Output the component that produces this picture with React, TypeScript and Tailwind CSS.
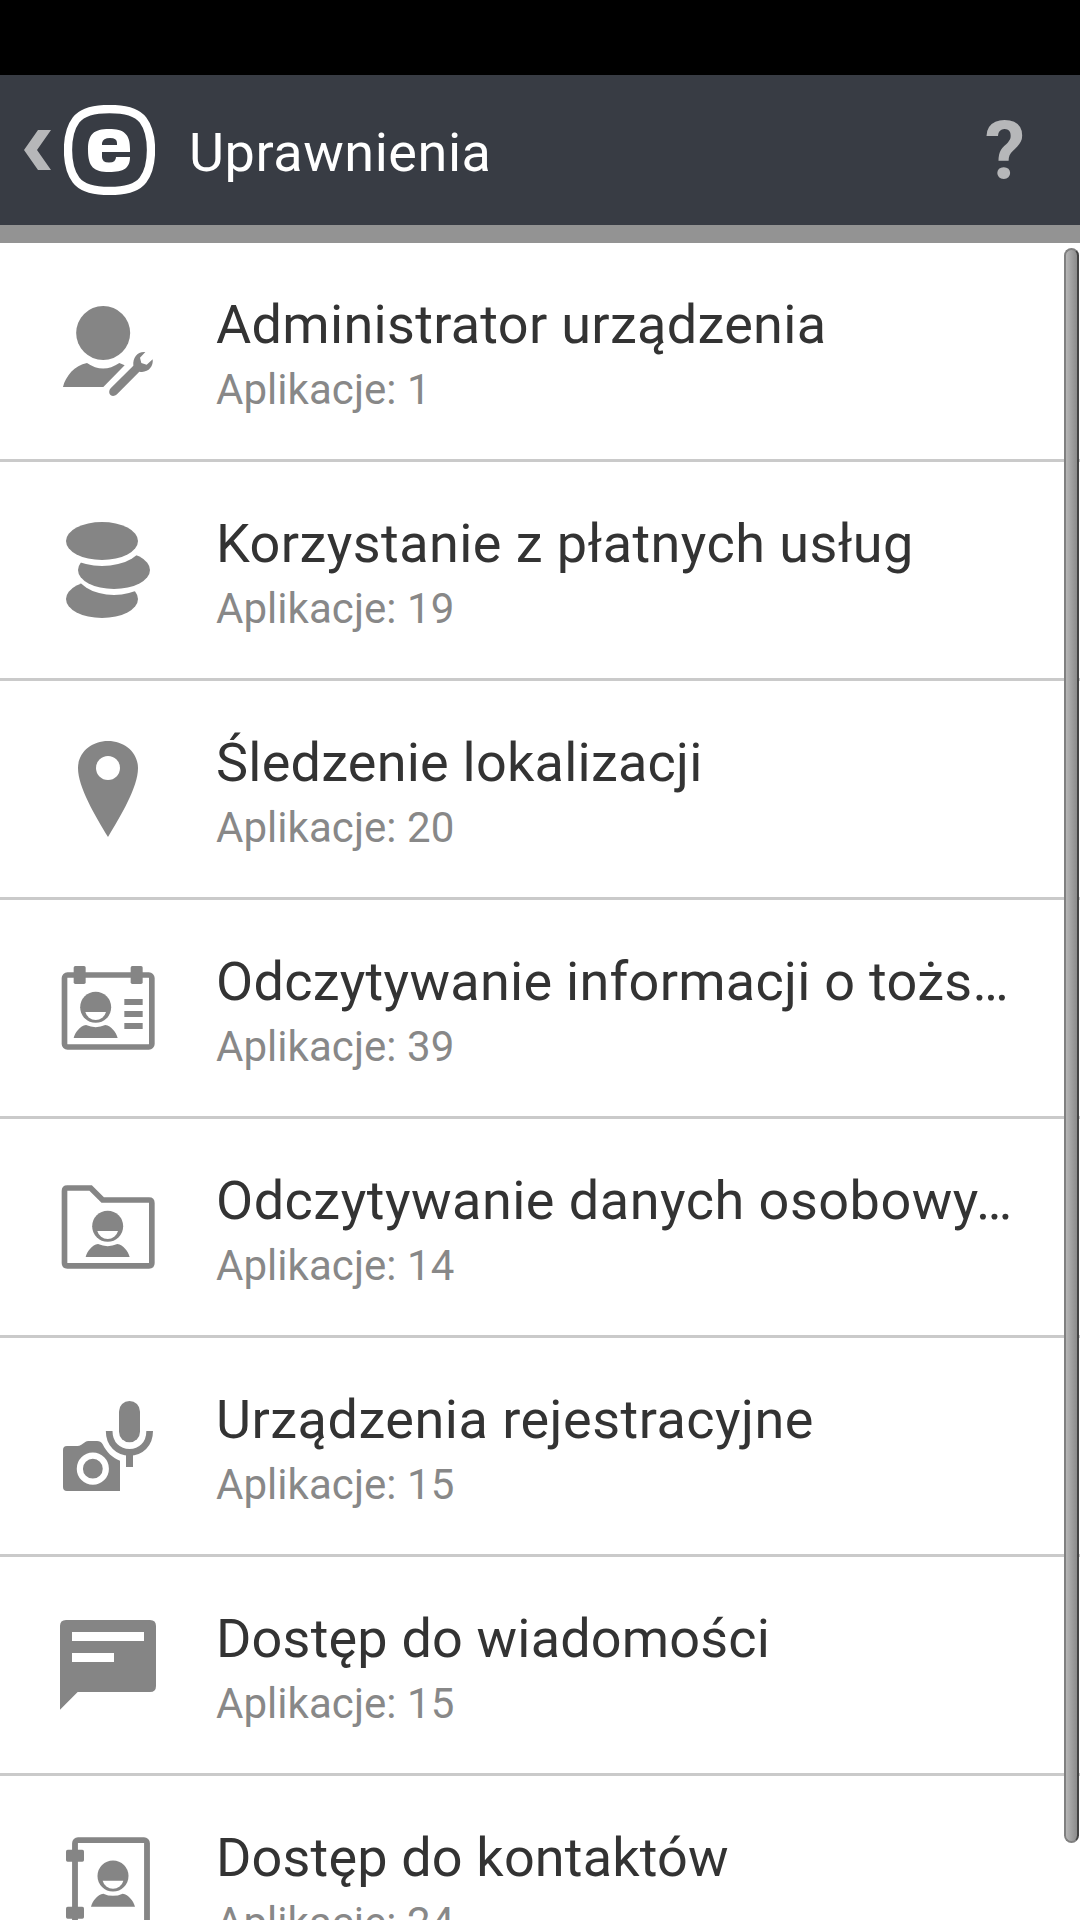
import type { ReactNode } from "react";

/* Icons are drawn on a 420 x 648 grid, three units per pixel, one grid per list row. */
function RowIcon({ children }: { children: ReactNode }) {
  return (
    <svg viewBox="0 0 420 648" className="h-[216px] w-[140px] shrink-0 fill-[#858585]">
      {children}
    </svg>
  );
}

function Person() {
  return (
    <>
      <circle cx="167" cy="202" r="46.500" />
      <path d="M136 216H198A32 32 0 0 1 136 216Z" fill="#fff" />
      <path d="M101 294C106 276 120 258 138 255Q167 268 196 255C214 258 228 276 233 294Z" />
    </>
  );
}

const AdminIcon = () => (
  <RowIcon>
    <g transform="translate(0 111)">
      <circle cx="189.500" cy="159" r="81" />
      <path d="M69 321C76 290 104 255 141 249Q189 282 238 249L254 256L190 321Z" />
      <path d="M212 325L280 257C278 232 292 214 316 216L300 233L304 249L320 254L338 238C341 261 323 280 298 275L231 343C215 357 200 339 212 325Z" />
    </g>
  </RowIcon>
);

const CoinsIcon = () => (
  <RowIcon>
    <g transform="translate(0 114)">
      <ellipse cx="186" cy="297" rx="108" ry="57" />
      <ellipse cx="222" cy="210" rx="117" ry="75" fill="#fff" />
      <ellipse cx="222" cy="210" rx="108" ry="57" />
      <ellipse cx="186" cy="123" rx="126" ry="75" fill="#fff" />
      <ellipse cx="186" cy="123" rx="108" ry="57" />
    </g>
  </RowIcon>
);

const PinIcon = () => (
  <RowIcon>
    <g transform="translate(0 117)">
      <path d="M204 63C254 63 294 98 294 144C294 202 242 288 204 351C166 288 114 202 114 144C114 98 154 63 204 63Z" />
      <circle cx="204" cy="144" r="36" fill="#fff" />
    </g>
  </RowIcon>
);

const IdentityIcon = () => (
  <RowIcon>
    <g transform="translate(0 120)">
      <rect x="73.500" y="105" width="262" height="216" rx="9" fill="none" stroke="#858585" strokeWidth="17" />
      <rect x="101" y="78" width="36" height="54" rx="5" />
      <rect x="272" y="78" width="36" height="54" rx="5" />
      <path d="M253 177h55v18h-55zM253 213h55v18h-55zM253 249h55v18h-55z" />
      <Person />
    </g>
  </RowIcon>
);

const FolderIcon = () => (
  <RowIcon>
    <g transform="translate(0 123)">
      <path
        d="M82 84H152L188 120H327Q335.500 120 335.500 129V309Q335.500 317.500 327 317.500H82Q73.500 317.500 73.500 309V93Q73.500 84 82 84Z"
        fill="none"
        stroke="#858585"
        strokeWidth="17"
      />
      <g transform="translate(36 -3)">
        <Person />
      </g>
    </g>
  </RowIcon>
);

const RecorderIcon = () => (
  <RowIcon>
    <g transform="translate(0 126)">
      <path d="M81 198H112Q118 198 124 194L137 185Q140 183 145 183H171Q182 183 188 193C200 217 217 234 240 242V333H81Q69 333 69 321V210Q69 198 81 198Z" />
      <circle cx="158.500" cy="266" r="39" stroke="#fff" strokeWidth="18.500" />
      <rect x="237" y="63" width="63" height="124" rx="31.500" />
      <path d="M207.500 153C207.500 193 235 217 268.500 217S329 193 329 153" fill="none" stroke="#858585" strokeWidth="20" />
      <path d="M258 220h21v41h-21z" />
    </g>
  </RowIcon>
);

const MessageIcon = () => (
  <RowIcon>
    <g transform="translate(0 129)">
      <path d="M78 60H330Q348 60 348 78V258Q348 276 330 276H113L60 329V78Q60 60 78 60Z" />
      <path d="M96 96h216v27H96zM96 159h126v27H96z" fill="#fff" />
    </g>
  </RowIcon>
);

const ContactsIcon = () => (
  <RowIcon>
    <g transform="translate(0 72)">
      <rect x="105" y="120.500" width="216" height="270" rx="9" fill="none" stroke="#858585" strokeWidth="17.500" />
      <rect x="78" y="149" width="54" height="36" rx="5" />
      <rect x="78" y="320" width="54" height="36" rx="5" />
      <g transform="translate(52 26)">
        <Person />
      </g>
    </g>
  </RowIcon>
);

const permissions = [
  { title: "Administrator urządzenia", count: 1, Icon: AdminIcon, tracking: "tracking-[0.31px]" },
  { title: "Korzystanie z płatnych usług", count: 19, Icon: CoinsIcon, tracking: "tracking-[0.44px]" },
  { title: "Śledzenie lokalizacji", count: 20, Icon: PinIcon, tracking: "tracking-[0.23px]" },
  { title: "Odczytywanie informacji o tożs…", count: 39, Icon: IdentityIcon, tracking: "tracking-[0.28px]" },
  { title: "Odczytywanie danych osobowy…", count: 14, Icon: FolderIcon, tracking: "tracking-[0.5px]" },
  { title: "Urządzenia rejestracyjne", count: 15, Icon: RecorderIcon, tracking: "tracking-[0.5px]" },
  { title: "Dostęp do wiadomości", count: 15, Icon: MessageIcon, tracking: "tracking-[0.18px]" },
  { title: "Dostęp do kontaktów", count: 24, Icon: ContactsIcon, tracking: "tracking-[0.16px]" },
];

function Header() {
  return (
    <header className="flex h-[150px] shrink-0 items-center bg-[#383c44] pl-6">
      <svg viewBox="0 0 27 40" className="h-10 w-[27px] fill-[#b6b7b9]">
        <path d="M14 0H27L13 20L27 40H14L0 20Z" />
      </svg>
      <svg viewBox="0 0 91 90" className="ml-[13px] h-[90px] w-[91px]">
        <path
          d="M45.500 4C62 4 73 7 79 15C85 23 87 33 87 45S85 67 79 75C73 83 62 86 45.500 86S18 83 12 75C6 67 4 57 4 45S6 23 12 15C18 7 29 4 45.500 4Z"
          fill="none"
          stroke="#fff"
          strokeWidth="8.300"
        />
        <path
          d="M24 45C24 29 30 24 45 24S66 29 66 44V47H38V52Q38 57.500 45 57.500T52 52H66C66 63 60 67 45 67S24 62 24 45ZM38 40H53V38Q53 33 46 33T38 38Z"
          fill="#fff"
          fillRule="evenodd"
        />
      </svg>
      <h1 className="ml-[34px] pt-[5px] text-[54px] leading-[64px] tracking-[0.55px] text-white">Uprawnienia</h1>
      <button className="mr-[55px] ml-auto pt-[3px] text-[81px] leading-[94px] font-bold text-[#b6b7b9]">?</button>
    </header>
  );
}

export default function App() {
  return (
    <div className="relative flex h-[1920px] w-[1080px] flex-col overflow-hidden bg-white font-['Roboto',sans-serif]">
      <div className="h-[75px] shrink-0 bg-black" />
      <Header />
      <div className="h-[18px] shrink-0 bg-[#939393]" />
      <ul>
        {permissions.map(({ title, count, Icon, tracking }) => (
          <li key={title} className="flex h-[219px] border-b-[3px] border-[#cacaca] pl-10">
            <Icon />
            <div className="ml-9 pt-[50px] whitespace-nowrap">
              <p className={`text-[54px] leading-[64px] text-[#333333] ${tracking}`}>{title}</p>
              <p className="mt-2 text-[42px] leading-[50px] tracking-[0.05px] text-[#888888]">Aplikacje: {count}</p>
            </div>
          </li>
        ))}
      </ul>
      <div className="absolute top-[248px] right-px h-[1595px] w-[15px] rounded-full border-2 border-[#808080] border-r-[#444444] bg-linear-to-r from-[#b6b6b6] to-[#8c8c8c]" />
    </div>
  );
}
